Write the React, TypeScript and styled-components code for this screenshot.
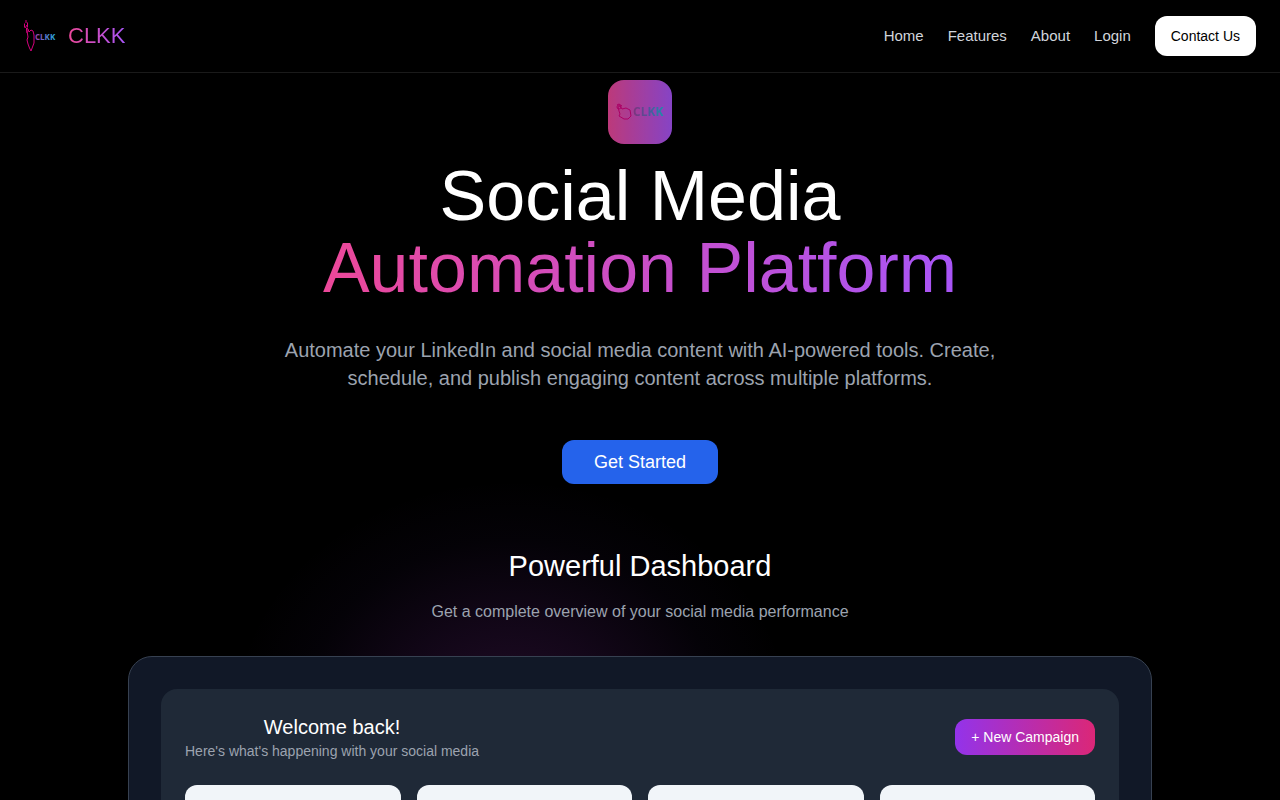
import React, { useId } from "react";
import styled, { createGlobalStyle } from "styled-components";

const GlobalStyle = createGlobalStyle`
  *, *::before, *::after { box-sizing: border-box; }
  body {
    margin: 0;
    background: #000;
    color: #fff;
    font-family: "Liberation Sans", Arial, sans-serif;
    font-size: 16px;
    line-height: 24px;
  }
  h1, h2, h3, p { margin: 0; font-weight: 400; }
  button { border: 0; font-family: inherit; cursor: pointer; }
`;

const Page = styled.div`
  min-height: 100vh;
  padding-top: 80px;
  background: radial-gradient(ellipse 280px 240px at 40% 720px, rgba(168, 60, 200, 0.2) 0, rgba(168, 60, 220, 0.11) 40%, rgba(130, 60, 220, 0.03) 75%, transparent 100%) #000;
`;

const Header = styled.header`
  position: fixed;
  inset: 0 0 auto;
  z-index: 10;
  display: flex;
  align-items: center;
  justify-content: space-between;
  padding: 16px 24px;
  background: #000;
  border-bottom: 1px solid #1a1a1a;
`;

const Brand = styled.a`
  display: flex;
  align-items: center;
  gap: 12px;
  text-decoration: none;
`;

const GradientText = styled.span`
  color: transparent;
  background: linear-gradient(to right, #ec4899, #a855f7);
  background-clip: text;
  -webkit-background-clip: text;
`;

const BrandName = styled(GradientText)`
  font-size: 22px;
  line-height: 32px;
`;

const Nav = styled.nav`
  display: flex;
  align-items: center;
  gap: 24px;
`;

const NavLink = styled.a`
  color: #d1d5db;
  font-size: 15px;
  text-decoration: none;
`;

const ContactButton = styled.button`
  padding: 10px 16px;
  border-radius: 12px;
  background: #fff;
  color: #000;
  font-size: 14px;
  line-height: 20px;
`;

const Hero = styled.section`
  display: flex;
  flex-direction: column;
  align-items: center;
  text-align: center;
`;

const LogoTile = styled.div`
  display: flex;
  padding: 8px;
  border-radius: 16px;
  background: linear-gradient(to right, #ec4899, #a855f7);
  opacity: 0.8;
`;

const Title = styled.h1`
  margin-top: 16px;
  font-size: 70px;
  line-height: 72px;

  span { display: block; }
`;

const Lead = styled.p`
  max-width: 768px;
  margin-top: 32px;
  padding: 0 24px;
  color: #9ca3af;
  font-size: 20px;
  line-height: 28px;
`;

const StartButton = styled.button`
  margin-top: 48px;
  padding: 8px 32px;
  border-radius: 12px;
  background: #2563eb;
  color: #fff;
  font-size: 18px;
  line-height: 28px;
`;

const Preview = styled.section`
  max-width: 1072px;
  margin: 64px auto 0;
  padding: 0 24px 64px;
  text-align: center;
`;

const SectionTitle = styled.h2`
  font-size: 29px;
  line-height: 36px;
`;

const SectionText = styled.p`
  margin: 16px 0 32px;
  color: #9ca3af;
`;

const Frame = styled.div`
  padding: 32px;
  border: 1px solid #374151;
  border-radius: 24px;
  background: #111827;
`;

const Panel = styled.div`
  padding: 24px;
  border-radius: 16px;
  background: #1f2937;
`;

const PanelHeader = styled.div`
  display: flex;
  align-items: center;
  justify-content: space-between;
  margin-bottom: 24px;
`;

const PanelTitle = styled.h3`
  font-size: 20px;
  line-height: 28px;
`;

const PanelText = styled.p`
  color: #9ca3af;
  font-size: 14px;
  line-height: 20px;
`;

const CampaignButton = styled.button`
  padding: 8px 16px;
  border-radius: 12px;
  background: linear-gradient(to right, #9333ea, #db2777);
  color: #fff;
  font-size: 14px;
  line-height: 20px;
`;

const Stats = styled.div`
  display: grid;
  grid-template-columns: repeat(4, 1fr);
  gap: 16px;
`;

const StatCard = styled.div`
  min-height: 128px;
  border-radius: 12px;
  background: #f1f5f9;
`;

const LogoText = styled.text`
  font-family: "Open Sans", sans-serif;
  font-weight: 700;
`;

function BrandMark() {
  const id = useId();
  return (
    <svg width="32" height="32" viewBox="0 0 32 32" fill="none" aria-hidden="true">
      <defs>
        <linearGradient id={id} gradientUnits="userSpaceOnUse" x1="11" y1="0" x2="32" y2="0">
          <stop offset="0" stopColor="#a83fae" />
          <stop offset="0.5" stopColor="#5c78cc" />
          <stop offset="1" stopColor="#20b5e8" />
        </linearGradient>
      </defs>
      <path stroke="#d6007e" strokeWidth="1" strokeLinejoin="round" d="M2 0v3M0.5 3.5v4M3.5 2.5v5M1 8l2-3M2.5 8l.5 5M2.5 8l1.5 1 1 3 2-2 2 1 1 4v8l-1.500 4-1.500 4-1.500-3-1.500-4-1-4 1-3z" />
      <LogoText x="11" y="20" fontSize="8" fill={`url(#${id})`}>CLKK</LogoText>
    </svg>
  );
}

function TileMark() {
  const id = useId();
  return (
    <svg width="48" height="48" viewBox="0 0 48 48" fill="none" aria-hidden="true">
      <defs>
        <linearGradient id={id} gradientUnits="userSpaceOnUse" x1="17" y1="0" x2="48" y2="0">
          <stop offset="0" stopColor="#a0409e" />
          <stop offset="0.5" stopColor="#6468c0" />
          <stop offset="1" stopColor="#20b5d8" />
        </linearGradient>
      </defs>
      <circle cx="3" cy="19" r="2" stroke="#d6007e" strokeWidth="1" />
      <path stroke="#d6007e" strokeWidth="1" strokeLinejoin="round" d="M1 17l2-1 3 2M2 19l1 4 1 3-1 2 5 3 4 0 3-3-1-6-4-2-4 1-2-3z" />
      <LogoText x="17" y="28" fontSize="12" fill={`url(#${id})`}>CLKK</LogoText>
    </svg>
  );
}

const links = ["Home", "Features", "About", "Login"];
const stats = [1, 2, 3, 4];

export default function App() {
  return (
    <Page>
      <GlobalStyle />
      <Header>
        <Brand href="#home">
          <BrandMark />
          <BrandName>CLKK</BrandName>
        </Brand>
        <Nav>
          {links.map((label) => (
            <NavLink key={label} href={`#${label.toLowerCase()}`}>{label}</NavLink>
          ))}
          <ContactButton type="button">Contact Us</ContactButton>
        </Nav>
      </Header>
      <main>
        <Hero>
          <LogoTile><TileMark /></LogoTile>
          <Title>
            <span>Social Media</span>
            <GradientText>Automation Platform</GradientText>
          </Title>
          <Lead>
            Automate your LinkedIn and social media content with AI-powered tools. Create,
            schedule, and publish engaging content across multiple platforms.
          </Lead>
          <StartButton type="button">Get Started</StartButton>
        </Hero>
        <Preview>
          <SectionTitle>Powerful Dashboard</SectionTitle>
          <SectionText>Get a complete overview of your social media performance</SectionText>
          <Frame>
            <Panel>
              <PanelHeader>
                <div>
                  <PanelTitle>Welcome back!</PanelTitle>
                  <PanelText>Here's what's happening with your social media</PanelText>
                </div>
                <CampaignButton type="button">+ New Campaign</CampaignButton>
              </PanelHeader>
              <Stats>
                {stats.map((n) => <StatCard key={n} />)}
              </Stats>
            </Panel>
          </Frame>
        </Preview>
      </main>
    </Page>
  );
}
